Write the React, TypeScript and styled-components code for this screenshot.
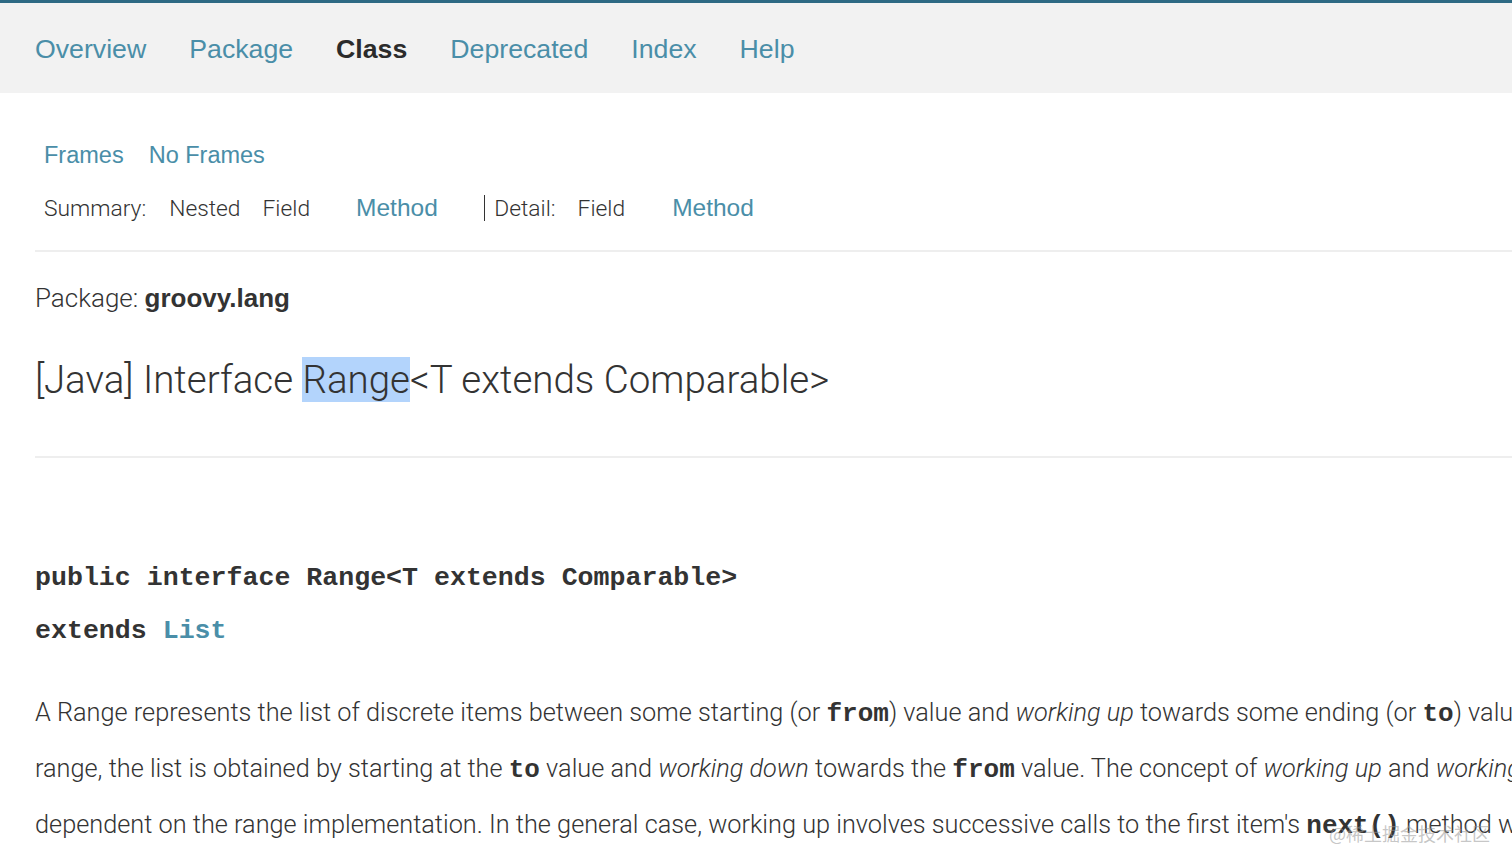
import React from "react";
import styled, { createGlobalStyle } from "styled-components";

const GlobalStyle = createGlobalStyle`
  html, body {
    margin: 0;
    padding: 0;
    background: #fff;
    overflow: hidden;
  }
  body {
    font-family: "Liberation Sans", Arial, sans-serif;
    color: #333;
  }
`;

const LINK = "#4a8ea8";

const navItems = [
  { label: "Overview" },
  { label: "Package" },
  { label: "Class", active: true },
  { label: "Deprecated" },
  { label: "Index" },
  { label: "Help" },
];

export default function App() {
  return (
    <Page>
      <GlobalStyle />
      <TopNav>
        {navItems.map((item) => (
          <NavLink key={item.label} $active={item.active}>
            {item.label}
          </NavLink>
        ))}
      </TopNav>

      <SubNav>
        <FrameLinks>
          <SmallLink>Frames</SmallLink>
          <SmallLink>No Frames</SmallLink>
        </FrameLinks>
        <SummaryRow>
          <Plain>Summary:</Plain>
          <Plain $space={23}>Nested</Plain>
          <Plain $space={22}>Field</Plain>
          <SummaryLink $space={46}>Method</SummaryLink>
          <Plain $space={46}>
            <Bar />
            Detail:
          </Plain>
          <Plain $space={22}>Field</Plain>
          <SummaryLink $space={47}>Method</SummaryLink>
        </SummaryRow>
      </SubNav>

      <Header>
        <PackageLine>
          Package: <strong>groovy.lang</strong>
        </PackageLine>
        <Title>
          [Java] Interface <Selected>Range</Selected>&lt;T extends Comparable&gt;
        </Title>
      </Header>

      <ContentBlock>
        <Signature>public interface Range&lt;T extends Comparable&gt;</Signature>
        <Signature>
          extends <CodeLink>List</CodeLink>
        </Signature>

        <Description>
          <Line>
            A Range represents the list of discrete items between some starting (or <Code>from</Code>) value
            and <em>working up</em> towards some ending (or <Code>to</Code>) value. For a reverse
          </Line>
          <Line>
            range, the list is obtained by starting at the <Code>to</Code> value and <em>working down</em> towards
            the <Code>from</Code> value. The concept of <em>working up</em> and <em>working down</em> is
          </Line>
          <Line>
            dependent on the range implementation. In the general case, working up involves successive calls to
            the first item's <Code>next()</Code> method while working
          </Line>
        </Description>
      </ContentBlock>

      <Watermark>@稀土掘金技术社区</Watermark>
    </Page>
  );
}

const Page = styled.div`
  position: relative;
  width: 1512px;
  height: 868px;
  overflow: hidden;
  border-top: 3px solid #2e6a84;
  box-sizing: border-box;
`;

const TopNav = styled.nav`
  display: flex;
  align-items: center;
  gap: 43px;
  height: 90px;
  padding: 0 35px;
  background: #f2f2f2;
`;

const NavLink = styled.a<{ $active?: boolean }>`
  font-size: 26.7px;
  color: ${(p) => (p.$active ? "#2b2b2b" : LINK)};
  font-weight: ${(p) => (p.$active ? 700 : 400)};
  text-decoration: none;
  cursor: pointer;
  padding-top: 2px;
`;

const SubNav = styled.div`
  margin: 0 0 0 35px;
  padding: 46px 0 26px 9px;
  border-bottom: 2px solid #eeeeee;
`;

const FrameLinks = styled.div`
  display: flex;
  gap: 25px;
  height: 32px;
  align-items: center;
`;

const SmallLink = styled.a`
  font-size: 23.5px;
  color: ${LINK};
  cursor: pointer;
`;

const SummaryRow = styled.div`
  display: flex;
  align-items: center;
  margin-top: 21px;
  height: 32px;
  font-family: Roboto, "Liberation Sans", sans-serif;
  font-weight: 300;
  font-size: 22.8px;
  color: #333;
`;

const Plain = styled.span<{ $space?: number }>`
  display: inline-flex;
  align-items: center;
  margin-left: ${(p) => p.$space ?? 0}px;
`;

const SummaryLink = styled.a<{ $space?: number }>`
  margin-left: ${(p) => p.$space ?? 0}px;
  font-family: "Liberation Sans", Arial, sans-serif;
  font-weight: 400;
  font-size: 24.5px;
  color: ${LINK};
  cursor: pointer;
`;

const Bar = styled.span`
  display: inline-block;
  width: 1.5px;
  height: 26px;
  background: #333;
  margin-right: 9px;
`;

const Header = styled.header`
  margin-left: 35px;
  padding-top: 29px;
  border-bottom: 2px solid #eeeeee;
  padding-bottom: 51px;
`;

const PackageLine = styled.div`
  font-family: Roboto, "Liberation Sans", sans-serif;
  font-weight: 300;
  font-size: 26px;
  line-height: 34px;
  color: #333;
  strong {
    font-family: "Liberation Sans", Arial, sans-serif;
    font-weight: 700;
  }
`;

const Title = styled.h1`
  margin: 40px 0 0;
  font-family: Roboto, "Liberation Sans", sans-serif;
  font-weight: 300;
  font-size: 38.5px;
  line-height: 50px;
  color: #333;
`;

const Selected = styled.span`
  background: #b3d4fc;
`;

const ContentBlock = styled.section`
  margin-left: 35px;
  padding-top: 94px;
`;

const Signature = styled.div`
  font-family: "Liberation Mono", "Courier New", monospace;
  font-weight: 700;
  font-size: 26.6px;
  line-height: 53px;
  color: #333;
  white-space: nowrap;
`;

const CodeLink = styled.a`
  color: ${LINK};
  cursor: pointer;
`;

const Description = styled.div`
  margin-top: 27px;
  font-family: Roboto, "Liberation Sans", sans-serif;
  font-weight: 300;
  font-size: 25.3px;
  color: #333;
`;

const Line = styled.div`
  height: 56px;
  line-height: 56px;
  white-space: nowrap;
`;

const Code = styled.code`
  font-family: "Liberation Mono", "Courier New", monospace;
  font-weight: 700;
  font-size: 26px;
  line-height: 1;
`;

const Watermark = styled.div`
  position: absolute;
  right: 22px;
  bottom: 22px;
  font-family: "Noto Sans CJK SC", sans-serif;
  font-size: 18px;
  color: rgba(150, 150, 150, 0.55);
  pointer-events: none;
`;
